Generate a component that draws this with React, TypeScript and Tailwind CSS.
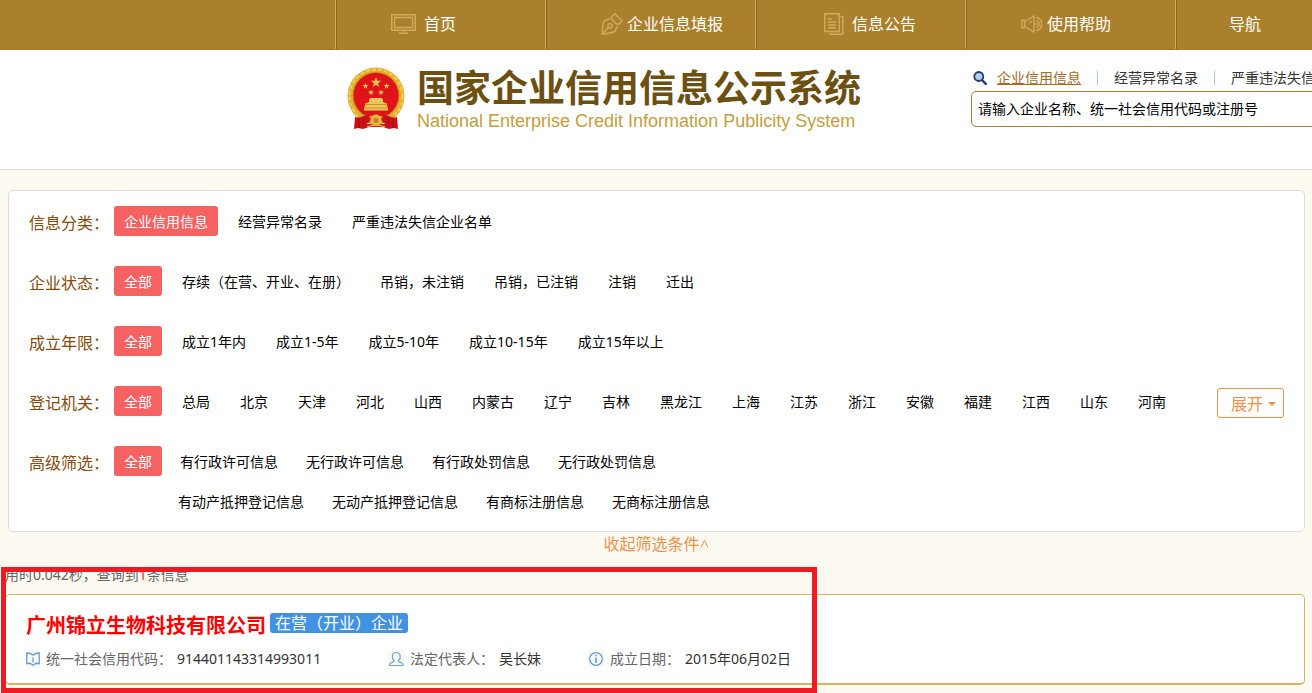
import type { ReactNode } from "react";

function MonitorIcon() {
  return (
    <svg width="25" height="20" viewBox="0 0 25 20" fill="none" stroke="#d3a95c" aria-hidden="true">
      <path d="M.75.75h23.5v15.5H.75z" strokeWidth="1.5" />
      <path d="M3.5 3.5h18v10h-18z" strokeWidth="1.3" />
      <path d="M12.5 16v3M8 19.2h9" strokeWidth="1.4" />
    </svg>
  );
}

function PenIcon() {
  return (
    <svg width="22" height="22" viewBox="0 0 22 22" fill="none" stroke="#d3a95c" strokeWidth="1.4" aria-hidden="true">
      <path d="M9 5.5 2.8 8.2C1.5 12.5 1.4 16.5 1 21c4.5-.5 9-1 13-2.500l2.300-5.500" />
      <path d="M1.200 20.800 7.500 14.200" />
      <circle cx="9" cy="12.800" r="2.200" />
      <path d="M10.200 4.200 13.800.8l7.200 7-3.500 3.600c-3.500-1-6.300-3.700-7.300-7.200z" />
    </svg>
  );
}

function NoticeIcon() {
  return (
    <svg width="20" height="22" viewBox="0 0 20 22" fill="none" stroke="#d3a95c" strokeWidth="1.4" aria-hidden="true">
      <path d="M.8.8h14.400v17.700H.8z" />
      <path d="M16.500 3.500h2.300v17.700H5" />
      <path d="M4 6h4M4 9h8M4 12h8M4 15h8" />
    </svg>
  );
}

function SpeakerIcon() {
  return (
    <svg width="22" height="18" viewBox="0 0 22 18" fill="none" stroke="#d3a95c" strokeWidth="1.4" aria-hidden="true">
      <path d="M.8 5.200h3v7.600h-3z" />
      <path d="M5.500 5.500 13 1v16l-7.500-4.500M8.500 8 11 6.500" />
      <path d="M15.300 2.500c7.200 1.500 7.200 11.500 0 13M15.300 5.700c3.500 1 3.500 5.600 0 6.600M15.300 8v2" />
    </svg>
  );
}

const star = "0,-1 .235,-.324 .951,-.309 .38,.124 .588,.809 0,.4 -.588,.809 -.38,.124 -.951,-.309 -.235,-.324";

function Emblem() {
  return (
    <svg width="58" height="64" viewBox="0 0 58 64" className="shrink-0" aria-hidden="true">
      <circle cx="29" cy="29" r="28.500" fill="#e2ae30" />
      <circle cx="29" cy="29" r="26.500" fill="none" stroke="#f3cd52" strokeWidth="2" strokeDasharray="4 2" />
      <circle cx="29" cy="28.500" r="23" fill="#e01319" stroke="#c08a1e" strokeWidth=".8" />
      <g fill="#ecc45c">
        <polygon points={star} transform="translate(29 15.500) scale(5.500)" />
        <polygon points={star} transform="translate(18.500 19) scale(3.300)" />
        <polygon points={star} transform="translate(39.500 19) scale(3.300)" />
        <polygon points={star} transform="translate(24 25.500) scale(3.200)" />
        <polygon points={star} transform="translate(34 25.500) scale(3.200)" />
        <path d="M22 32.500l1.500-1.500h11l1.500 1.500V35l4 1.500v2.200l1 2.300v2.500H17V41l1-2.300v-2.200l4-1.500z" />
      </g>
      <path d="M18 37.500h22M17 41h24" stroke="#c4881f" strokeWidth=".8" />
      <path d="M10 46c8 5 14 4 19 1 5 3 11 4 19 1l-5 8H15z" fill="#dda52b" />
      <path d="M8 50c5 2 9-2 13-2l3 4c-1 4-5 5-7 6l-1 4-5-1-4 1zM50 50c-5 2-9-2-13-2l-3 4c1 4 5 5 7 6l1 4 5-1 4 1z" fill="#cb1118" />
      <path d="M16 57h26v5l-6-2H22l-6 2z" fill="#cb1118" />
      <circle cx="29" cy="53.500" r="5.500" fill="#e8b63e" />
      <circle cx="29" cy="53.500" r="2.500" fill="#c17f1a" />
      <path d="M20 59.500c6-1.500 12-1.500 18 0" stroke="#e6b03a" strokeWidth="1.200" fill="none" />
      <path d="M12 52v9M46 52v9M17 51l-1 6M41 51l1 6" stroke="#98090f" strokeWidth=".8" />
    </svg>
  );
}

function SearchIcon() {
  return (
    <svg width="14" height="14" viewBox="0 0 14 14" fill="none" aria-hidden="true">
      <circle cx="5.800" cy="5.500" r="4.500" fill="#a9d3ef" stroke="#2c3470" strokeWidth="1.800" />
      <path d="m9.500 9.500 3.300 3.300" stroke="#2c3470" strokeWidth="2.400" strokeLinecap="round" />
    </svg>
  );
}

function BookIcon() {
  return (
    <svg width="14" height="16" viewBox="0 0 14 16" fill="none" stroke="#5c9fd8" strokeWidth="1.300" aria-hidden="true">
      <path d="M.8 2v10.500h3.700L7 14.300l2.500-1.800h3.700V2c-2.500 0-4.500.5-6.200 2C5.300 2.500 3.300 2 .8 2z" />
      <path d="M7 6.500v5" />
    </svg>
  );
}

function PersonIcon() {
  return (
    <svg width="16" height="16" viewBox="0 0 16 16" fill="none" stroke="#6aa8dc" strokeWidth="1.200" aria-hidden="true">
      <path d="M6 9.500C3.500 7.500 3.600 1.500 8.300 1.500s4.800 6 2.300 8v1l3.600 1.700c.8.500.8 1.300.8 2.300H1.500c0-1 0-1.800.8-2.300L6 10.500z" />
    </svg>
  );
}

function InfoIcon() {
  return (
    <svg width="16" height="16" viewBox="0 0 16 16" fill="none" stroke="#5c9fd8" strokeWidth="1.300" aria-hidden="true">
      <circle cx="8" cy="8" r="6.300" />
      <path d="M8 3.800v1.400M8 6.600V12" strokeWidth="1.500" />
    </svg>
  );
}

const navItems = [
  { label: "首页", icon: <MonitorIcon />, space: "pl-[55px] gap-2" },
  { label: "企业信息填报", icon: <PenIcon />, space: "pl-[55px] gap-1" },
  { label: "信息公告", icon: <NoticeIcon />, space: "pl-[68px] gap-2" },
  { label: "使用帮助", icon: <SpeakerIcon />, space: "pl-[55px] gap-1" },
  { label: "导航", icon: null, space: "pl-[53px]" },
];

const tabs = ["企业信用信息", "经营异常名录", "严重违法失信企业名单"];

function Options({ items, tight = false, active = true }: { items: string[]; tight?: boolean; active?: boolean }) {
  return (
    <div className={tight ? "flex flex-wrap gap-x-2 gap-y-2.5" : "flex flex-wrap gap-2.5"}>
      {items.map((item, i) => (
        <button
          key={item}
          type="button"
          className={
            active && i === 0
              ? "h-[30px] rounded-[3px] bg-[#f66162] px-2.5 pt-0.5 text-sm text-white"
              : "h-[30px] rounded-[3px] px-2.5 pt-0.5 text-sm text-black"
          }
        >
          {item}
        </button>
      ))}
    </div>
  );
}

function FilterRow({ label, children, extra }: { label: string; children: ReactNode; extra?: ReactNode }) {
  return (
    <div className="flex items-start">
      <div className="mr-[5px] w-20 shrink-0 whitespace-nowrap pt-[5px] text-base text-[#874a0b]">{label}</div>
      <div className="min-w-0 grow">{children}</div>
      {extra}
    </div>
  );
}

function Field({ icon, label, value }: { icon: ReactNode; label: string; value: string }) {
  return (
    <div className="flex items-center whitespace-nowrap text-sm">
      <span className="mr-1.5 bg-[#fbf8ef]">{icon}</span>
      <dt className="text-[#666]">{label}</dt>
      <dd className="ml-[5px] text-[#333]">{value}</dd>
    </div>
  );
}

export default function App() {
  return (
    <div className="relative min-h-screen overflow-hidden bg-[#fcf9f0] font-['Noto_Sans','Noto_Sans_CJK_SC',sans-serif]">
      <nav className="flex h-[50px] overflow-hidden border-b border-[#a1772a] bg-[#ab802c] pl-[335px]">
        {navItems.map((item) => (
          <a
            key={item.label}
            href="#"
            className={`flex w-[210px] shrink-0 items-center whitespace-nowrap border-l border-[#d3a95c] pb-0.5 text-base text-white shadow-[inset_1px_0_0_#8a6520] ${item.space}`}
          >
            {item.icon}
            <span>{item.label}</span>
          </a>
        ))}
      </nav>

      <header className="flex h-[120px] overflow-hidden border-b border-[#ddd] bg-white pl-[347px]">
        <div className="flex w-[624px] shrink-0 items-start gap-3 pt-[17px]">
          <Emblem />
          <div className="whitespace-nowrap">
            <h1 className="text-[37px] leading-[42px] font-bold text-[#6b5011]">国家企业信用信息公示系统</h1>
            <p className="font-['Liberation_Sans',Arial,sans-serif] text-[18px] leading-6 text-[#c49e3c]">
              National Enterprise Credit Information Publicity System
            </p>
          </div>
        </div>
        <form className="w-[460px] shrink-0 pt-[17px]">
          <div className="flex h-[22px] items-center whitespace-nowrap text-sm text-[#333]">
            <span className="mr-2.5 ml-0.5">
              <SearchIcon />
            </span>
            {tabs.map((tab, i) => (
              <div key={tab} className="flex items-center">
                {i > 0 && <span className="mx-4 h-3.5 w-px bg-[#a9c9d0]" />}
                <a href="#" className={i === 0 ? "text-[#a5691d] underline" : ""}>
                  {tab}
                </a>
              </div>
            ))}
          </div>
          <input
            type="text"
            aria-label="企业搜索"
            placeholder="请输入企业名称、统一社会信用代码或注册号"
            className="mt-[2px] h-9 w-full rounded-[5px] border border-[#ab802c] bg-white px-1.5 pb-0.5 text-sm text-black outline-none placeholder:text-black"
          />
        </form>
      </header>

      <main>
        <section className="mt-5 mr-[7px] ml-2 flex flex-col gap-[30px] rounded-[5px] border border-[#ddd] bg-white px-5 py-[15px]">
          <FilterRow label="信息分类：">
            <Options items={tabs} />
          </FilterRow>
          <FilterRow label="企业状态：">
            <Options items={["全部", "存续（在营、开业、在册）", "吊销，未注销", "吊销，已注销", "注销", "迁出"]} />
          </FilterRow>
          <FilterRow label="成立年限：">
            <Options items={["全部", "成立1年内", "成立1-5年", "成立5-10年", "成立10-15年", "成立15年以上"]} />
          </FilterRow>
          <FilterRow
            label="登记机关："
            extra={
              <button
                type="button"
                className="mt-0.5 -mb-0.5 flex h-[30px] w-[67px] shrink-0 items-center justify-end gap-[5px] rounded-[3px] border border-[#f0914a] pt-0.5 pr-[7px] text-base text-[#f0914a]"
              >
                展开
                <svg width="8" height="4" viewBox="0 0 8 4" aria-hidden="true">
                  <path d="M0 0h8L4 4z" fill="#f0914a" />
                </svg>
              </button>
            }
          >
            <Options
              items={["全部", "总局", "北京", "天津", "河北", "山西", "内蒙古", "辽宁", "吉林", "黑龙江", "上海", "江苏", "浙江", "安徽", "福建", "江西", "山东", "河南"]}
            />
          </FilterRow>
          <FilterRow label="高级筛选：">
            <Options tight items={["全部", "有行政许可信息", "无行政许可信息", "有行政处罚信息", "无行政处罚信息"]} />
            <div className="mt-2.5 pl-[54px]">
              <Options
                tight
                active={false}
                items={["有动产抵押登记信息", "无动产抵押登记信息", "有商标注册信息", "无商标注册信息"]}
              />
            </div>
          </FilterRow>
        </section>

        <div className="flex h-[30px] justify-center">
          <button type="button" className="flex h-6 items-center text-base text-[#f0914a]">
            收起筛选条件
            <svg width="9" height="8" viewBox="0 0 9 8" fill="none" stroke="#f0914a" aria-hidden="true">
              <path d="m1 7.500 3.500-7 3.500 7" />
            </svg>
          </button>
        </div>

        <p className="ml-[5px] h-8 pt-[3px] text-sm text-[#666]">
          用时0.042秒，查询到<span className="text-[#e33]">1</span>条信息
        </p>

        <article className="mr-[7px] ml-[5px] rounded-[5px] border border-b-2 border-[#d6b45c] bg-white px-5 pt-4 pb-3.5">
          <div className="flex h-[30px] items-start gap-1">
            <h2 className="text-xl leading-[30px] font-bold text-[#f00]">广州锦立生物科技有限公司</h2>
            <span className="mt-0.5 rounded-[3px] bg-[#4292e2] px-[5px] text-base leading-5 text-white">
              在营（开业）企业
            </span>
          </div>
          <dl className="mt-2 grid grid-cols-[362px_200px_auto]">
            <Field icon={<BookIcon />} label="统一社会信用代码：" value="914401143314993011" />
            <Field icon={<PersonIcon />} label="法定代表人：" value="吴长妹" />
            <Field icon={<InfoIcon />} label="成立日期：" value="2015年06月02日" />
          </dl>
        </article>
      </main>

      <div className="pointer-events-none absolute top-[567px] left-px h-[126px] w-[816px] border-5 border-[#ed1c24]" />
    </div>
  );
}
